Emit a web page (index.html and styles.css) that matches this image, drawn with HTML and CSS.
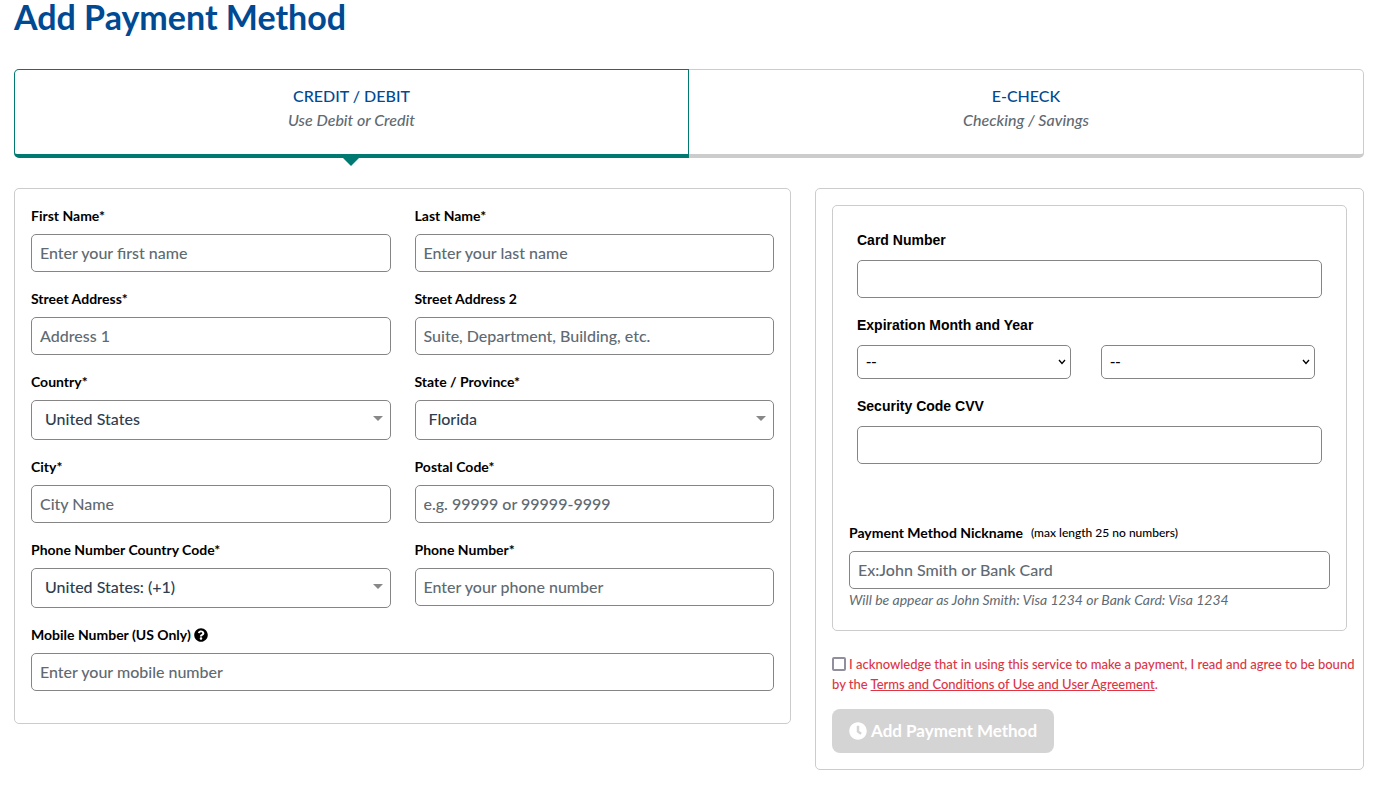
FILE: index.html
```html
<!DOCTYPE html>
<html lang="en">
<head>
<meta charset="utf-8">
<meta name="viewport" content="width=device-width, initial-scale=1">
<title>Add Payment Method</title>
<link rel="stylesheet" href="styles.css">
</head>
<body>
<main class="page">
  <h1 class="title">Add Payment Method</h1>
  <div class="tabs" role="tablist">
    <button class="tab tab-active" type="button" role="tab" aria-selected="true">
      <span class="tab-name">CREDIT / DEBIT</span>
      <span class="tab-note">Use Debit or Credit</span>
    </button>
    <button class="tab" type="button" role="tab" aria-selected="false">
      <span class="tab-name">E-CHECK</span>
      <span class="tab-note">Checking / Savings</span>
    </button>
  </div>
  <form class="columns">
    <section class="card billing">
      <div class="field">
        <label class="label" for="first">First Name*</label>
        <input class="control" id="first" type="text" placeholder="Enter your first name">
      </div>
      <div class="field">
        <label class="label" for="last">Last Name*</label>
        <input class="control" id="last" type="text" placeholder="Enter your last name">
      </div>
      <div class="field">
        <label class="label" for="street">Street Address*</label>
        <input class="control" id="street" type="text" placeholder="Address 1">
      </div>
      <div class="field">
        <label class="label" for="street2">Street Address 2</label>
        <input class="control" id="street2" type="text" placeholder="Suite, Department, Building, etc.">
      </div>
      <div class="field">
        <label class="label" for="country">Country*</label>
        <select class="control picker" id="country"><option>United States</option></select>
      </div>
      <div class="field">
        <label class="label" for="state">State / Province*</label>
        <select class="control picker" id="state"><option>Florida</option></select>
      </div>
      <div class="field">
        <label class="label" for="city">City*</label>
        <input class="control" id="city" type="text" placeholder="City Name">
      </div>
      <div class="field">
        <label class="label" for="postal">Postal Code*</label>
        <input class="control" id="postal" type="text" placeholder="e.g. 99999 or 99999-9999">
      </div>
      <div class="field">
        <label class="label" for="code">Phone Number Country Code*</label>
        <select class="control picker" id="code"><option>United States: (+1)</option></select>
      </div>
      <div class="field">
        <label class="label" for="phone">Phone Number*</label>
        <input class="control" id="phone" type="tel" placeholder="Enter your phone number">
      </div>
      <div class="field field-wide">
        <label class="label" for="mobile">Mobile Number (US Only)
          <svg class="help" viewBox="0 0 512 512" aria-hidden="true"><path fill="currentColor" d="M504 256c0 137-111 248-248 248S8 393 8 256 119 8 256 8s248 111 248 248zM262.700 90c-54.500 0-89.300 23-116.500 63.800-3.500 5.300-2.400 12.400 2.700 16.300l34.700 26.300c5.200 3.900 12.600 3 16.700-2.100 17.900-22.700 30.100-35.800 57.300-35.800 20.400 0 45.700 13.100 45.700 33 0 15-12.400 22.700-32.500 34C247.100 238.500 216 254.900 216 296v4c0 6.600 5.400 12 12 12h56c6.600 0 12-5.400 12-12v-1.300c0-28.500 83.200-29.600 83.200-106.700 0-58-60.200-102-116.500-102zM256 338c-25.400 0-46 20.600-46 46s20.600 46 46 46 46-20.600 46-46-20.600-46-46-46z"/></svg>
        </label>
        <input class="control" id="mobile" type="tel" placeholder="Enter your mobile number">
      </div>
    </section>
    <section class="card payment">
      <div class="card details">
        <div class="card-fields">
          <div class="card-field">
            <label class="card-label" for="number">Card Number</label>
            <input class="control" id="number" type="text">
          </div>
          <div class="card-field">
            <label class="card-label" for="month">Expiration Month and Year</label>
            <div class="expiry">
              <select class="control expiry-select" id="month"><option>--</option></select>
              <select class="control expiry-select" aria-label="Expiration year"><option>--</option></select>
            </div>
          </div>
          <div class="card-field">
            <label class="card-label" for="cvv">Security Code CVV</label>
            <input class="control" id="cvv" type="text">
          </div>
        </div>
        <div class="nickname">
          <label class="label" for="nickname">Payment Method Nickname <small class="limit">(max length 25 no numbers)</small></label>
          <input class="control" id="nickname" type="text" placeholder="Ex:John Smith or Bank Card">
          <p class="hint">Will be appear as John Smith: Visa 1234 or Bank Card: Visa 1234</p>
        </div>
      </div>
      <div class="consent">
        <input class="check" id="agree" type="checkbox"><label for="agree">I acknowledge that in using this service to make a payment, I read and agree to be bound by the <a class="terms" href="#">Terms and Conditions of Use and User Agreement</a>.</label>
      </div>
      <button class="submit" type="submit" disabled>
        <svg class="clock" viewBox="0 0 512 512" aria-hidden="true"><path fill="currentColor" d="M256 8C119 8 8 119 8 256s111 248 248 248 248-111 248-248S393 8 256 8zm57.100 350.100L224.900 294c-3.100-2.300-4.900-5.900-4.900-9.700V116c0-6.600 5.400-12 12-12h48c6.600 0 12 5.400 12 12v137.700l63.500 46.200c5.400 3.900 6.500 11.400 2.600 16.800l-28.200 38.800c-3.900 5.300-11.400 6.500-16.800 2.600z"/></svg>
        <span>Add Payment Method</span>
      </button>
    </section>
  </form>
</main>
</body>
</html>
```
FILE: styles.css
```css
*, *::before, *::after { box-sizing: border-box; }
body {
  margin: 0;
  background: #fff;
  color: #000;
  font: 500 16px/24px Lato, sans-serif;
}
.page { padding: 0 22px 16px 14px; }
.title {
  margin: 0 0 35px;
  color: #004a93;
  font-size: 34px;
  font-weight: 700;
  line-height: 34px;
}
.tabs {
  display: grid;
  grid-template-columns: 1fr 1fr;
  margin-bottom: 30px;
}
.tab {
  position: relative;
  display: flex;
  flex-direction: column;
  align-items: center;
  padding: 14px 16px 22px;
  border: 1px solid #ccc;
  border-bottom-width: 4px;
  border-left: 0;
  border-radius: 0 5px 5px 0;
  background: #fff;
  font: inherit;
}
.tab-active {
  border-color: #007a70;
  border-left: 1px solid #007a70;
  border-radius: 5px 0 0 5px;
}
.tab-active::after {
  content: "";
  position: absolute;
  top: 100%;
  left: 50%;
  margin: 3px 0 0 -10px;
  border: 9px solid transparent;
  border-top-color: #007a70;
  border-bottom: 0;
}
.tab-name { color: #004a93; }
.tab-note { color: #5f6a72; font-style: italic; }
.columns {
  display: grid;
  grid-template-columns: minmax(0, 777fr) minmax(0, 549fr);
  gap: 24px;
  align-items: start;
}
.card { border: 1px solid #ccc; border-radius: 5px; }
.billing {
  display: grid;
  grid-template-columns: 1fr 1fr;
  column-gap: 24px;
  row-gap: 16px;
  padding: 16px 16px 32px;
}
.field-wide { grid-column: 1 / -1; }
.label {
  display: flex;
  align-items: center;
  gap: 3px;
  margin-bottom: 8px;
  font-size: 14px;
  font-weight: 700;
  line-height: 21px;
}
.help { width: 14px; height: 14px; }
.control {
  display: block;
  width: 100%;
  height: 38px;
  padding: 0 8px 2px;
  border: 1px solid #858585;
  border-radius: 5px;
  background: #fff;
  color: #2c3e50;
  font: inherit;
}
.control::placeholder { color: #5f6a72; opacity: 1; }
.picker {
  appearance: none;
  height: 40px;
  padding: 0 32px 2px 13px;
  background: url("data:image/svg+xml,%3Csvg xmlns='http://www.w3.org/2000/svg' viewBox='0 0 10 5'%3E%3Cpath d='M0 0h10L5 5z' fill='%23888'/%3E%3C/svg%3E") no-repeat right 7px top 15px / 10px 5px;
}
.payment { padding: 16px; }
.details { padding: 24px 16px 20px; }
.card-fields {
  display: grid;
  gap: 17px;
  margin-bottom: 58px;
  padding: 0 8px;
}
.card-label {
  display: block;
  margin-bottom: 10px;
  font: 700 14px/20px "Liberation Sans", Arial, sans-serif;
}
.expiry {
  display: grid;
  grid-template-columns: 1fr 1fr;
  gap: 30px;
  padding-right: 7px;
}
.expiry-select {
  appearance: none;
  height: 34px;
  padding: 0 20px 0 8px;
  background: url("data:image/svg+xml,%3Csvg xmlns='http://www.w3.org/2000/svg' viewBox='0 0 8 6'%3E%3Cpath d='M1 1l3 3.500L7 1' fill='none' stroke='%23000' stroke-width='1.300'/%3E%3C/svg%3E") no-repeat right 4px center / 8px 6px;
  color: #000;
  font-family: "Liberation Sans", Arial, sans-serif;
}
.limit { margin-left: 5px; font-size: 12px; font-weight: 500; }
.hint {
  margin: 1px 0 0;
  color: #5f6a72;
  font-size: 14px;
  font-style: italic;
  font-weight: 400;
  line-height: 20px;
}
.consent {
  margin: 23px -12px 15px 0;
  color: #dc3545;
  font-size: 13px;
  line-height: 20px;
}
.check {
  appearance: none;
  width: 14px;
  height: 14px;
  margin: 0 3px 0 0;
  border: 2px solid #8f8f9d;
  border-radius: 2px;
  background: #fff;
  vertical-align: -2px;
}
.check:checked { background: #004a93; }
.terms { color: inherit; text-decoration: underline; }
.submit {
  display: flex;
  align-items: center;
  gap: 4px;
  height: 44px;
  padding: 0 17px;
  border: 0;
  border-radius: 8px;
  background: #d4d4d4;
  color: #fff;
  font: inherit;
  font-size: 17px;
  font-weight: 700;
}
.clock { width: 18px; height: 18px; }
@media (max-width: 800px) {
  .columns { grid-template-columns: minmax(0, 1fr); }
}
```
